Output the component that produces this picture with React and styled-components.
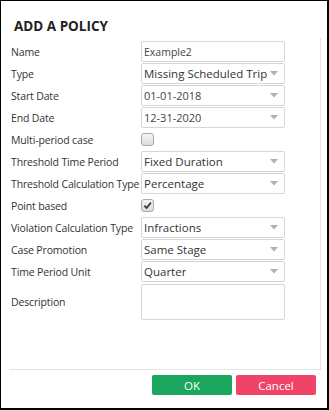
import styled, { createGlobalStyle } from "styled-components";

const Global = createGlobalStyle`
  html, body { margin: 0; padding: 0; background: #fff; }
  * { box-sizing: border-box; }
`;

const fields = [
  { label: "Name", type: "text", value: "Example2" },
  { label: "Type", type: "select", value: "Missing Scheduled Trip" },
  { label: "Start Date", type: "date", value: "01-01-2018" },
  { label: "End Date", type: "date", value: "12-31-2020" },
  { label: "Multi-period case", type: "check", value: false },
  { label: "Threshold Time Period", type: "select", value: "Fixed Duration" },
  { label: "Threshold Calculation Type", type: "select", value: "Percentage" },
  { label: "Point based", type: "check", value: true },
  { label: "Violation Calculation Type", type: "select", value: "Infractions" },
  { label: "Case Promotion", type: "select", value: "Same Stage" },
  { label: "Time Period Unit", type: "select", value: "Quarter" },
];

const Arrow = () => (
  <ArrowIcon viewBox="0 0 8 5">
    <path d="M0 0 L8 0 L4 4.5 Z" fill="#b0b0b0" />
  </ArrowIcon>
);

const Field = ({ type, value }) => {
  if (type === "check") {
    return (
      <Check $checked={value}>
        {value && (
          <svg viewBox="0 0 10 10" width="9" height="9">
            <path d="M1.5 5.2 L4 7.8 L8.8 1.8" stroke="#333" strokeWidth="1.8" fill="none" />
          </svg>
        )}
      </Check>
    );
  }
  return (
    <Box $kind={type}>
      <Value $kind={type}>{value}</Value>
      {type !== "text" && <Arrow />}
    </Box>
  );
};

const App = () => (
  <>
    <Global />
    <Dialog>
      <Title>ADD A POLICY</Title>
      <Body>
        {fields.map((f) => (
          <Row key={f.label}>
            <Label>{f.label}</Label>
            <Field type={f.type} value={f.value} />
          </Row>
        ))}
        <Row $tall>
          <Label>Description</Label>
          <TextArea />
        </Row>
      </Body>
      <Footer>
        <Button $color="#1aa65c">OK</Button>
        <Button $color="#ef4467">Cancel</Button>
      </Footer>
    </Dialog>
  </>
);

const Dialog = styled.div`
  width: 329px;
  height: 410px;
  border: 1px solid #000;
  border-right-width: 2px;
  border-bottom-width: 2px;
  display: flex;
  flex-direction: column;
  font-family: "Open Sans", "Noto Sans", sans-serif;
  color: #333;
`;

const Title = styled.div`
  padding: 17px 0 0 13px;
  height: 37px;
  font-size: 13.5px;
  font-weight: 700;
  color: #222;
  line-height: 16px;
`;

const Body = styled.div`
  margin-left: 8px;
  width: 312px;
  height: 332px;
  border-right: 1px solid #e3e3e3;
  border-bottom: 1px solid #e3e3e3;
  padding: 3px 0 0 2px;
  display: flex;
  flex-direction: column;
  gap: 1px;
`;

const Row = styled.div`
  display: grid;
  grid-template-columns: 130px 144px;
  align-items: center;
  height: ${(p) => (p.$tall ? "36px" : "21px")};
  margin-top: ${(p) => (p.$tall ? "1px" : "0")};
`;

const Label = styled.div`
  font-size: 10.5px;
  color: #333;
  white-space: nowrap;
  letter-spacing: -0.15px;
`;

const Box = styled.div`
  height: 21px;
  border: 1px solid #d6d6d6;
  border-radius: 2px;
  display: flex;
  align-items: center;
  justify-content: space-between;
  padding: 0 6px 0 2px;
  background: #fff;
`;

const sizes = { select: "11.5px", date: "11px", text: "10.5px" };

const Value = styled.span`
  font-size: ${(p) => sizes[p.$kind]};
  color: ${(p) => (p.$kind === "select" ? "#333" : "#444")};
  white-space: nowrap;
  overflow: hidden;
`;

const ArrowIcon = styled.svg`
  width: 8px;
  height: 5px;
  flex: none;
`;

const Check = styled.div`
  width: 13px;
  height: 13px;
  border: 1px solid #a9a9a9;
  border-radius: 3px;
  background: linear-gradient(#f4f4f4, #dcdcdc);
  display: flex;
  align-items: center;
  justify-content: center;
`;

const TextArea = styled.div`
  height: 36px;
  border: 1px solid #d6d6d6;
  border-radius: 2px;
`;

const Footer = styled.div`
  display: flex;
  justify-content: flex-end;
  gap: 4px;
  padding: 5px 11px 0 0;
`;

const Button = styled.button`
  width: 80px;
  height: 20px;
  border: none;
  border-radius: 2px;
  background: ${(p) => p.$color};
  color: #fff;
  font-family: "Open Sans", "Noto Sans", sans-serif;
  font-size: 11.5px;
  padding: 0;
`;

export default App;
